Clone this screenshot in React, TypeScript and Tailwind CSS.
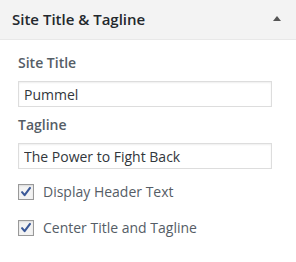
import { useState } from "react";

const font = { fontFamily: "'Open Sans', 'Noto Sans', sans-serif" };

function Check({ label, defaultChecked }: { label: string; defaultChecked?: boolean }) {
  const [on, setOn] = useState(!!defaultChecked);
  return (
    <label className="flex items-center gap-[9px] h-[21px] cursor-pointer">
      <span
        onClick={() => setOn(!on)}
        className="w-4 h-4 border border-[#999] bg-[#f3f3f3] shadow-[inset_0_1px_2px_rgba(0,0,0,0.1)] flex items-center justify-center"
      >
        {on && (
          <svg viewBox="0 0 16 16" className="w-[14px] h-[14px]">
            <path d="M3.5 8.2 L6.4 11.6 L12.6 3.4" fill="none" stroke="#3b5998" strokeWidth="2.4" strokeLinecap="round" strokeLinejoin="round" />
          </svg>
        )}
      </span>
      <span className="text-[14px] text-[#555d66]">{label}</span>
    </label>
  );
}

const App = () => {
  return (
    <div style={font} className="w-[296px] h-[262px] bg-white overflow-hidden">
      {/* Section header */}
      <div className="h-10 bg-[#f3f3f3] border-b border-[#e8e8e8] flex items-center justify-between pl-3 pr-[15px]">
        <h3 className="text-[15px] font-semibold text-[#23282d] leading-none">Site Title &amp; Tagline</h3>
        <svg width="8" height="5" viewBox="0 0 8 5" className="mb-[2px]">
          <path d="M0 5 L4 0 L8 5 Z" fill="#555" />
        </svg>
      </div>

      <div className="pl-[18px] pr-6 pt-[14px]">
        <div className="text-[14px] font-semibold text-[#555d66] leading-[18px] mb-[9px]">Site Title</div>
        <input
          defaultValue="Pummel"
          className="w-[254px] h-[26px] border border-[#ddd] shadow-[inset_0_1px_2px_rgba(0,0,0,0.07)] px-[5px] text-[14px] text-[#32373c] outline-none"
        />
        <div className="text-[14px] font-semibold text-[#555d66] leading-[18px] mt-[9px] mb-[9px]">Tagline</div>
        <input
          defaultValue="The Power to Fight Back"
          className="w-[254px] h-[26px] border border-[#ddd] shadow-[inset_0_1px_2px_rgba(0,0,0,0.07)] px-[5px] text-[14px] text-[#32373c] outline-none"
        />
        <div className="flex flex-col gap-[15px] mt-[12px]">
          <Check label="Display Header Text" defaultChecked />
          <Check label="Center Title and Tagline" defaultChecked />
        </div>
      </div>
    </div>
  );
};

export default App;
